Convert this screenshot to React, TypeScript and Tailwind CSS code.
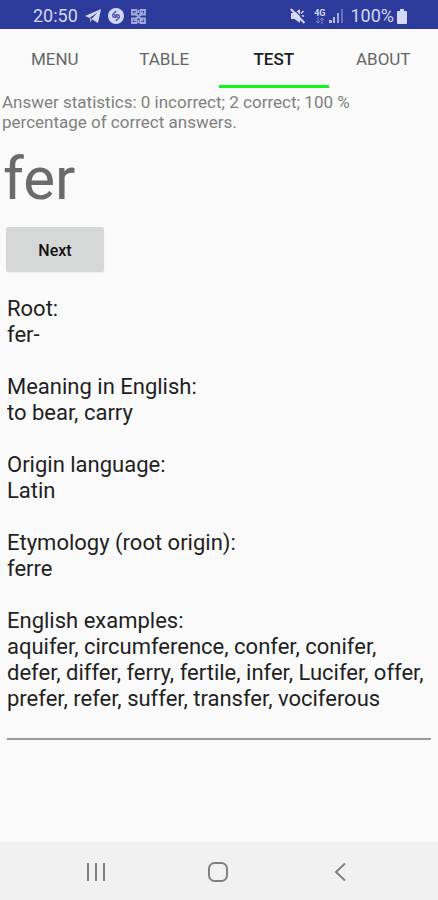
import { useState } from "react";

const tabs = ["MENU", "TABLE", "TEST", "ABOUT"];

const details = `Root:
fer-

Meaning in English:
to bear, carry

Origin language:
Latin

Etymology (root origin):
ferre

English examples:
aquifer, circumference, confer, conifer, defer, differ, ferry, fertile, infer, Lucifer, offer, prefer, refer, suffer, transfer, vociferous`;

function StatusBar() {
  return (
    <div className="flex h-[29px] items-center justify-between bg-[#2c3a9b] pt-[3px] pr-[31px] pl-[33px] text-[#d3d9f6]">
      <div className="flex items-center gap-[7px]">
        <span className="text-lg leading-6">20:50</span>
        {/* Telegram */}
        <svg className="h-4 w-4" viewBox="0 0 16 16" fill="currentColor">
          <path d="M16 1 0 8l4.500 2L12.500 4.500 6.500 11l6.500 4z" />
          <path d="M4.800 10 6.800 11.300 5.600 14.500z" />
        </svg>
        {/* Shazam */}
        <svg className="h-4 w-4" viewBox="0 0 16 16">
          <circle cx="8" cy="8" r="8" fill="currentColor" />
          <path
            d="M8 3.500 5.500 5.500c-2 1.800-.5 4.600 2 3.500M6.500 6.500 8 9M8 12.500l2.500-2c2-1.800.5-4.600-2-3.500M9.500 9.500 8 7"
            fill="none"
            stroke="#4a57b0"
            strokeWidth="1.400"
            strokeLinecap="round"
          />
        </svg>
        {/* Code app */}
        <svg className="h-[15px] w-[15px] opacity-70" viewBox="0 0 15 15" fill="none" stroke="currentColor" strokeWidth="1.800">
          <path d="M1 1h4.500v4.500H1zM9.500 1H14v4.500H9.500zM1 9.500h4.500V14H1zM9.500 9.500H14V14H9.500z" />
          <path d="M3 3.300 12 12M12 3 3 12M7.500 1v3M7.500 11v3" />
        </svg>
      </div>
      <div className="flex items-center">
        {/* Muted */}
        <svg className="mr-2 h-4 w-4" viewBox="0 0 16 16" fill="currentColor">
          <path d="M1 5h3.500L10 1v14l-5.500-4H1z" />
          <path d="M11 5.500 13.500 3M11.500 8H14" stroke="currentColor" strokeWidth="1.500" />
          <path d="M2.500 0 16 13" stroke="#2c3a9b" strokeWidth="1.200" />
          <path d="M.8 1 14.500 15" stroke="currentColor" strokeWidth="2" />
        </svg>
        {/* 4G data */}
        <div className="mr-1 flex flex-col items-center">
          <span className="text-[9px] leading-[8px] font-bold">4G</span>
          <svg className="h-[7px] w-[10px] opacity-50" viewBox="0 0 10 7" fill="none" stroke="currentColor">
            <path d="M3 0v6M1 4l2 2 2-2M7 7V1M5 3l2-2 2 2" />
          </svg>
        </div>
        <svg className="mr-[7px] h-[14px] w-[14px]" viewBox="0 0 14 14" fill="currentColor">
          <path d="M0 11h3v3H0zM4 8h2v6H4z" opacity=".8" />
          <path d="M8 4h2v10H8z" opacity=".7" />
          <path d="M12 0h2v14h-2z" opacity=".35" />
        </svg>
        <span className="text-lg leading-6">100%</span>
        <svg className="ml-[3px] h-[15px] w-[10px]" viewBox="0 0 10 15" fill="currentColor">
          <path d="M3 0h4v2h2q1 0 1 1v11q0 1-1 1H1q-1 0-1-1V3q0-1 1-1h2z" />
        </svg>
      </div>
    </div>
  );
}

function BottomNav() {
  return (
    <nav className="flex h-[58px] items-center justify-center gap-[82px] bg-[#f1f1f1] pt-[2px] pr-[2px] text-[#808080]">
      <button aria-label="Recent apps" className="flex w-10 justify-center">
        <svg className="h-5 w-5" viewBox="0 0 20 20" fill="none" stroke="currentColor" strokeWidth="2">
          <path d="M2 1v18M10 1v18M18 1v18" />
        </svg>
      </button>
      <button aria-label="Home" className="flex w-10 justify-center">
        <svg className="h-5 w-5" viewBox="0 0 20 20" fill="none" stroke="currentColor" strokeWidth="2">
          <rect x="1" y="1" width="18" height="18" rx="5.500" />
        </svg>
      </button>
      <button aria-label="Back" className="flex w-10 justify-center">
        <svg className="h-5 w-5" viewBox="0 0 20 20" fill="none" stroke="currentColor" strokeWidth="2">
          <path d="m15 1.500-9 8.500 9 8.500" />
        </svg>
      </button>
    </nav>
  );
}

export default function App() {
  const [activeTab, setActiveTab] = useState("TEST");
  const [text, setText] = useState(details);

  return (
    <div className="flex min-h-screen flex-col bg-[#fafafa] font-['Roboto',sans-serif]">
      <StatusBar />

      <div role="tablist" className="grid h-[59px] grid-cols-4">
        {tabs.map((tab) => (
          <button
            key={tab}
            role="tab"
            aria-selected={tab === activeTab}
            onClick={() => setActiveTab(tab)}
            className={`border-b-3 pt-[5px] text-[17px] ${
              tab === activeTab ? "border-[#12f51c] font-medium text-[#1c1c1c]" : "border-transparent text-[#666666]"
            }`}
          >
            {tab}
          </button>
        ))}
      </div>

      <main className="flex flex-1 flex-col items-start">
        <p className="max-w-[400px] pt-1 pl-[2px] text-[17px] leading-5 text-[#808080]">
          Answer statistics: 0 incorrect; 2 correct; 100 % percentage of correct answers.
        </p>
        <h1 className="mt-3 pl-[3px] text-[60px] leading-[70px] text-[#6b6b6b]">fer</h1>
        <button className="mt-[13px] ml-[6px] h-[45px] w-[98px] rounded-xs bg-[#d6d8d7] pt-[2px] text-base font-medium text-[#111111] shadow-xs">
          Next
        </button>
        <div className="mt-6 w-full px-[7px]">
          <textarea
            aria-label="Root details"
            rows={16}
            value={text}
            onChange={(e) => setText(e.target.value)}
            className="block w-full resize-none overflow-hidden border-b-2 border-[#9a9a9a] pb-[26px] text-[22px] leading-[26px] text-[#1f1f1f] outline-none"
          />
        </div>
      </main>

      <BottomNav />
    </div>
  );
}
